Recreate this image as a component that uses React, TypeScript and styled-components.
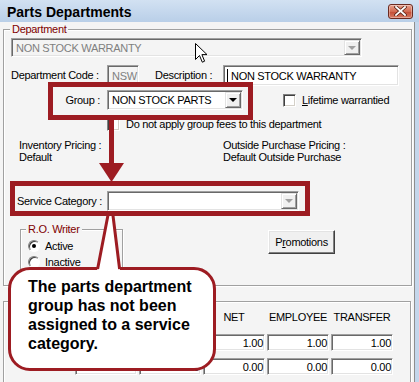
import React from "react"
import styled, { createGlobalStyle } from "styled-components"

const RED = "#9d1c22"

const GlobalStyle = createGlobalStyle`
  html, body {
    margin: 0;
    padding: 0;
    background: #f4f4f4;
  }
  body {
    font-family: "Liberation Sans", Arial, sans-serif;
    font-size: 11px;
    letter-spacing: -0.3px;
    color: #000;
  }
  * {
    box-sizing: border-box;
  }
`

const Window = styled.div`
  position: relative;
  width: 419px;
  height: 382px;
  overflow: hidden;
  display: flex;
  flex-direction: column;
  background: #c4d6eb;
`
const TitleBar = styled.div`
  flex: 0 0 22px;
  display: flex;
  align-items: center;
  justify-content: space-between;
  padding: 2px 6px 0 7px;
  background: linear-gradient(to bottom, #d2e1f2, #b9cfe8);
`
const Title = styled.div`
  font-size: 14px;
  font-weight: bold;
  letter-spacing: 0;
`
const CloseButton = styled.div`
  width: 25px;
  height: 15px;
  margin-top: -2px;
  display: flex;
  align-items: center;
  justify-content: center;
  border: 1px solid #6b2a20;
  border-radius: 3px;
  background: linear-gradient(to bottom, #e9a18f, #d26a51 50%, #c24a33 51%, #d77a62);
  box-shadow: inset 0 0 0 1px rgba(255, 255, 255, 0.35);
`
const Client = styled.div`
  flex: 1;
  min-height: 0;
  margin-right: 4px;
  border-right: 1px solid #8e8e8e;
  background: #f4f4f4;
  display: flex;
  flex-direction: column;
`
const GroupBox = styled.div<{ $w: number; $h: number; $mt: number; $ml: number; $pad: string }>`
  position: relative;
  flex-shrink: 0;
  display: flex;
  flex-direction: column;
  width: ${p => p.$w}px;
  height: ${p => p.$h}px;
  margin: ${p => p.$mt}px 0 0 ${p => p.$ml}px;
  padding: ${p => p.$pad};
  border: 1px solid #a0a0a0;
  box-shadow: inset 1px 1px 0 #fff, 1px 1px 0 #fff;
`
const Legend = styled.span<{ $left: number }>`
  position: absolute;
  top: -7px;
  left: ${p => p.$left}px;
  padding: 0 2px;
  line-height: 13px;
  background: #f4f4f4;
  color: #800000;
`
const Row = styled.div<{ $mt: number; $h: number; $top?: boolean }>`
  flex-shrink: 0;
  display: flex;
  align-items: ${p => (p.$top ? "flex-start" : "center")};
  height: ${p => p.$h}px;
  margin-top: ${p => p.$mt}px;
`
const Label = styled.span<{ $w?: number; $right?: boolean; $pl?: number; $pr?: number; $ml?: number }>`
  flex-shrink: 0;
  width: ${p => (p.$w ? `${p.$w}px` : "auto")};
  margin-left: ${p => p.$ml ?? 0}px;
  padding: 0 ${p => p.$pr ?? 0}px 0 ${p => p.$pl ?? 0}px;
  text-align: ${p => (p.$right ? "right" : "left")};
  line-height: 13px;
  white-space: nowrap;
`
const TextBox = styled.div<{ $w: number; $h: number; $disabled?: boolean; $right?: boolean; $grey?: boolean }>`
  flex-shrink: 0;
  display: flex;
  align-items: center;
  justify-content: ${p => (p.$right ? "flex-end" : "flex-start")};
  width: ${p => p.$w}px;
  height: ${p => p.$h}px;
  padding: 1px 1px 1px ${p => (p.$right ? 1 : 4)}px;
  border: 1px solid;
  border-color: #a0a0a0 #fff #fff #a0a0a0;
  box-shadow: inset 1px 1px 0 #696969, inset -1px -1px 0 #e3e3e3;
  background: ${p => (p.$grey ? "#f4f4f4" : "#fff")};
  color: ${p => (p.$disabled ? "#808080" : "#000")};
  white-space: nowrap;
  overflow: hidden;
`
const Caret = styled.span`
  width: 1px;
  height: 13px;
  margin: 0 3px 0 -1px;
  background: #000;
`
const DropButton = styled.span<{ $disabled?: boolean }>`
  flex-shrink: 0;
  align-self: stretch;
  width: 16px;
  margin-left: auto;
  display: flex;
  align-items: center;
  justify-content: center;
  background: #f0f0f0;
  border: 1px solid;
  border-color: #e3e3e3 #696969 #696969 #e3e3e3;
  box-shadow: inset 1px 1px 0 #fff, inset -1px -1px 0 #a0a0a0;
  &::after {
    content: "";
    border-left: 4px solid transparent;
    border-right: 4px solid transparent;
    border-top: 4px solid ${p => (p.$disabled ? "#a0a0a0" : "#000")};
  }
`
const CheckBox = styled.span<{ $ml: number }>`
  flex-shrink: 0;
  width: 13px;
  height: 13px;
  margin-left: ${p => p.$ml}px;
  margin-right: 6px;
  background: #fff;
  border: 1px solid;
  border-color: #808080 #fff #fff #808080;
  box-shadow: inset 1px 1px 0 #404040, inset -1px -1px 0 #d4d0c8;
`
const Columns = styled.div`
  flex-shrink: 0;
  display: flex;
  margin-top: 8px;
  line-height: 12px;
`
const Column = styled.div<{ $w: number; $pl: number }>`
  width: ${p => p.$w}px;
  padding-left: ${p => p.$pl}px;
  white-space: nowrap;
`
const RadioList = styled.div`
  display: flex;
  flex-direction: column;
`
const RadioRow = styled.label`
  display: flex;
  align-items: center;
  height: 16px;
  gap: 5px;
`
const Radio = styled.span<{ $checked?: boolean }>`
  width: 12px;
  height: 12px;
  border-radius: 50%;
  border: 1px solid;
  border-color: #808080 #fff #fff #808080;
  box-shadow: inset 1px 1px 0 #404040;
  background: #fff;
  display: flex;
  align-items: center;
  justify-content: center;
  &::after {
    content: "";
    width: 4px;
    height: 4px;
    border-radius: 50%;
    background: ${p => (p.$checked ? "#000" : "transparent")};
  }
`
const PushButton = styled.button<{ $ml: number }>`
  flex-shrink: 0;
  width: 67px;
  height: 24px;
  margin: 1px 0 0 ${p => p.$ml}px;
  padding: 0;
  font: inherit;
  letter-spacing: inherit;
  color: #000;
  background: #f0f0f0;
  border: 1px solid;
  border-color: #fff #404040 #404040 #fff;
  box-shadow: inset -1px -1px 0 #808080, inset 1px 1px 0 #e3e3e3;
`
const PriceGrid = styled.div`
  display: grid;
  grid-template-columns: repeat(6, 62px);
  column-gap: 2px;
  row-gap: 7px;
`
const HeadCell = styled.div`
  height: 12px;
  margin-bottom: 4px;
  line-height: 12px;
  text-align: center;
  white-space: nowrap;
`
const Highlight = styled.div<{ $x: number; $y: number; $w: number; $h: number }>`
  position: absolute;
  left: ${p => p.$x}px;
  top: ${p => p.$y}px;
  width: ${p => p.$w}px;
  height: ${p => p.$h}px;
  border: 5px solid ${RED};
  z-index: 4;
`
const Bubble = styled.div`
  position: absolute;
  left: 8px;
  top: 267px;
  width: 208px;
  height: 104px;
  padding: 7px 0 0 17px;
  border: 3px solid ${RED};
  border-radius: 22px;
  background: #fff;
  font-size: 16px;
  font-weight: bold;
  line-height: 19px;
  letter-spacing: 0;
  z-index: 2;
`
const Overlay = styled.svg`
  position: absolute;
  left: 0;
  top: 0;
  z-index: 3;
  pointer-events: none;
`
const Cursor = styled.svg`
  position: absolute;
  left: 195px;
  top: 43px;
  z-index: 5;
`

// first column holds row captions that sit under the callout
const priceRows = [
  [null, "1.00", "1.00", "1.00", "1.00", "1.00"],
  [null, "30.00", "0.00", "0.00", "0.00", "0.00"],
]

export default function App() {
  return (
    <Window>
      <GlobalStyle />
      <TitleBar>
        <Title>Parts Departments</Title>
        <CloseButton>
          <svg width="13" height="10" viewBox="0 0 13 10">
            <path d="M2 1 L11 9 M11 1 L2 9" stroke="#5a2418" strokeWidth="3.4" strokeLinecap="square" />
            <path d="M2 1 L11 9 M11 1 L2 9" stroke="#fff" strokeWidth="1.8" strokeLinecap="square" />
          </svg>
        </CloseButton>
      </TitleBar>

      <Client>
        <GroupBox $w={409} $h={257} $mt={7} $ml={3} $pad="8px 0 0 7px">
          <Legend $left={6}>Department</Legend>

          <Row $mt={0} $h={19}>
            <TextBox $w={351} $h={19} $disabled $grey>
              NON STOCK WARRANTY
              <DropButton $disabled />
            </TextBox>
          </Row>

          <Row $mt={8} $h={21}>
            <Label $w={96}>Department Code :</Label>
            <TextBox $w={32} $h={21} $disabled $grey>NSW</TextBox>
            <Label $w={68} $ml={16}>Description :</Label>
            <TextBox $w={176} $h={21}>
              <Caret />
              NON STOCK WARRANTY
            </TextBox>
          </Row>

          <Row $mt={4} $h={20}>
            <Label $w={96} $right $pr={7}>Group :</Label>
            <TextBox $w={136} $h={20}>
              NON STOCK PARTS
              <DropButton />
            </TextBox>
            <CheckBox $ml={40} />
            <Label>
              <u>L</u>ifetime warrantied
            </Label>
          </Row>

          <Row $mt={8} $h={13}>
            <CheckBox $ml={96} />
            <Label>Do not apply group fees to this department</Label>
          </Row>

          <Columns>
            <Column $w={212} $pl={8}>
              Inventory Pricing :
              <br />
              Default
            </Column>
            <Column $w={180} $pl={0}>
              Outside Purchase Pricing :
              <br />
              Default Outside Purchase
            </Column>
          </Columns>

          <Row $mt={28} $h={20}>
            <Label $w={96} $pl={6}>Service Category :</Label>
            <TextBox $w={192} $h={20}>
              <DropButton $disabled />
            </TextBox>
          </Row>

          <Row $mt={18} $h={50} $top>
            <GroupBox $w={103} $h={50} $mt={0} $ml={9} $pad="8px 0 0 7px">
              <Legend $left={5}>R.O. Writer</Legend>
              <RadioList>
                <RadioRow>
                  <Radio $checked />
                  Active
                </RadioRow>
                <RadioRow>
                  <Radio />
                  Inactive
                </RadioRow>
              </RadioList>
            </GroupBox>
            <PushButton $ml={145}>
              P<u>r</u>omotions
            </PushButton>
          </Row>
        </GroupBox>

        <GroupBox $w={408} $h={100} $mt={15} $ml={3} $pad="9px 0 0 7px">
          <PriceGrid>
            <HeadCell />
            <HeadCell />
            <HeadCell />
            <HeadCell>NET</HeadCell>
            <HeadCell>EMPLOYEE</HeadCell>
            <HeadCell>TRANSFER</HeadCell>
            {priceRows.map((row, r) =>
              row.map((v, c) =>
                v === null ? (
                  <span key={`${r}-${c}`} />
                ) : (
                  <TextBox key={`${r}-${c}`} $w={62} $h={17} $right>
                    {v}
                  </TextBox>
                )
              )
            )}
          </PriceGrid>
        </GroupBox>
      </Client>

      <Bubble>
        The parts department
        <br />
        group has not been
        <br />
        assigned to a service
        <br />
        category.
      </Bubble>

      <Overlay width="419" height="382" viewBox="0 0 419 382">
        <rect x="109" y="119" width="5" height="46" fill={RED} />
        <polygon points="99,163 124,163 111.5,182" fill={RED} />
        <polygon points="108,214 113,214 120,271 97,271" fill="#fff" />
        <path d="M108.2 214 L97.6 269 M112.8 214 L119.6 269" stroke={RED} strokeWidth="3" fill="none" />
      </Overlay>

      <Highlight $x={48} $y={82} $w={205} $h={38} />
      <Highlight $x={10} $y={181} $w={300} $h={35} />

      <Cursor width="13" height="21" viewBox="0 0 13 21">
        <path
          d="M0.5 0.5 L0.5 16.5 L4.5 12.5 L7.3 19.2 L9.6 18.2 L6.9 11.6 L12 11.6 Z"
          fill="#fff"
          stroke="#000"
          strokeWidth="1"
          strokeLinejoin="miter"
        />
      </Cursor>
    </Window>
  )
}
